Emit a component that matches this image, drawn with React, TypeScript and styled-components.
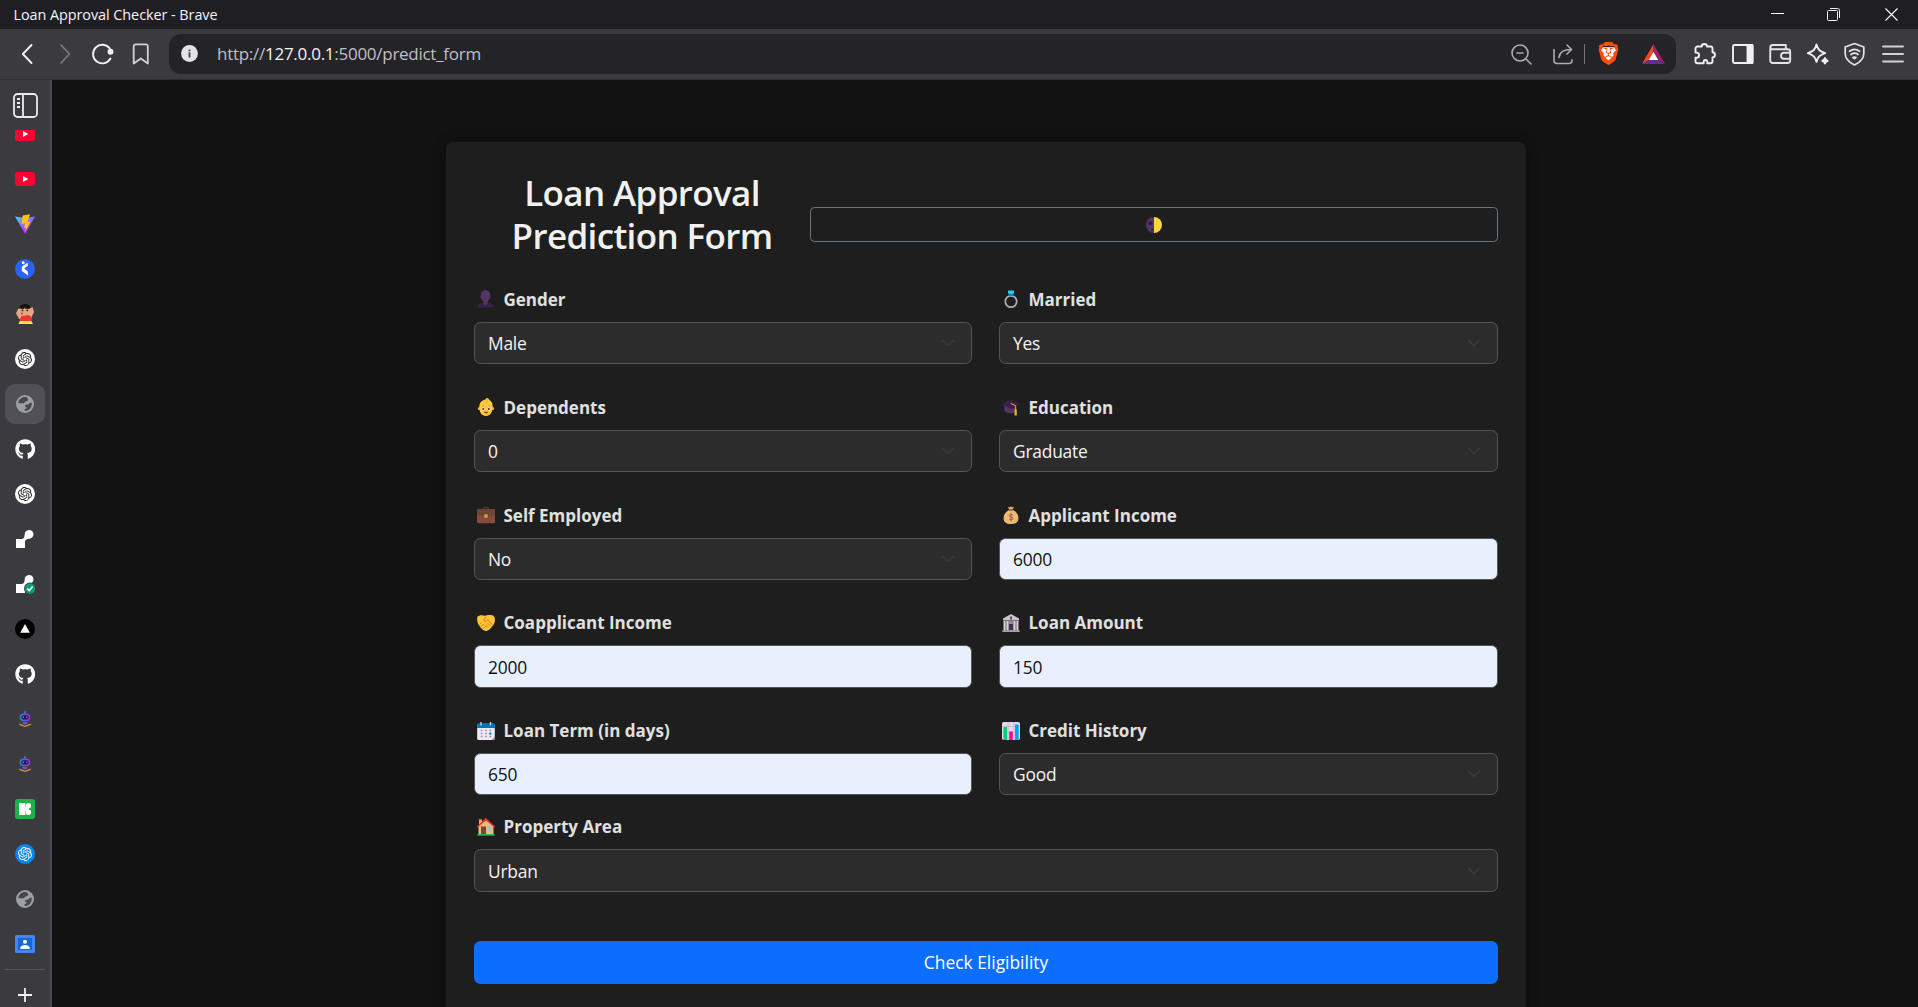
import React from "react";
import styled, { createGlobalStyle } from "styled-components";
import { SiBrave, SiOpenai } from "react-icons/si";
import { FaGithub } from "react-icons/fa";

const GlobalStyle = createGlobalStyle`
  *, *::before, *::after { box-sizing: border-box; }
  html, body { margin: 0; height: 100%; overflow: hidden; background: #121212; }
  body { font-family: "Open Sans", "Noto Sans", sans-serif; }
  svg { display: block; flex: none; }
`;

const Window = styled.div`
  display: flex;
  flex-direction: column;
  height: 100vh;
  width: 100%;
`;

/* ---------- title bar ---------- */
const TitleBar = styled.header`
  display: flex;
  align-items: center;
  justify-content: space-between;
  height: 29px;
  padding-left: 13.5px;
  background: #1f1e23;
  color: #f4f4f6;
  font-size: 14.4px;
  letter-spacing: -0.05px;
`;

const WindowControls = styled.div`
  display: flex;
  height: 29px;
  margin-right: -1.5px;
`;

const WindowButton = styled.span`
  display: grid;
  place-items: center;
  width: 56.7px;
`;

/* ---------- toolbar ---------- */
const Toolbar = styled.nav`
  display: flex;
  align-items: center;
  height: 51px;
  padding: 0 6.4px 1px 8px;
  background: #3b3a3f;
  border-bottom: 1px solid #303034;
`;

const ToolButton = styled.span<{ $width?: number }>`
  display: grid;
  place-items: center;
  width: ${(p) => p.$width ?? 38}px;
  height: 38px;
  flex: none;
  color: #e4e3e8;
`;

const AddressBar = styled.div`
  display: flex;
  align-items: center;
  flex: 1;
  height: 40px;
  margin: 1px 10.6px 0 9px;
  padding: 0 2px 1px 12px;
  border-radius: 12px;
  background: #242328;
`;

const Url = styled.span`
  flex: 1;
  margin-left: 19px;
  padding-bottom: 1px;
  font-size: 17px;
  letter-spacing: -0.27px;
  color: #c0bfc5;
  white-space: nowrap;

  b {
    font-weight: 400;
    color: #f4f4f6;
  }
`;

const AddressDivider = styled.span`
  width: 1.5px;
  height: 20px;
  background: #737278;
`;

/* ---------- body ---------- */
const Body = styled.div`
  display: flex;
  flex: 1;
  min-height: 0;
`;

const Sidebar = styled.aside`
  display: flex;
  flex-direction: column;
  align-items: center;
  width: 52px;
  border-right: 2px solid #4b4a4f;
  background: #3b3a3f;
`;

const SidebarTop = styled.div`
  display: grid;
  place-items: center;
  flex: none;
  width: 50px;
  height: 50px;
`;

const TabList = styled.div`
  display: flex;
  flex-direction: column;
  gap: 5px;
  flex: none;
  height: 838px;
  overflow: hidden;

  > :first-child {
    margin-top: -16px;
  }
`;

const Tab = styled.div<{ $active?: boolean }>`
  display: grid;
  place-items: center;
  flex: none;
  width: 40px;
  height: 40px;
  border-radius: 10px;
  background: ${(p) => (p.$active ? "#515056" : "transparent")};
`;

const SidebarBottom = styled.div`
  display: flex;
  justify-content: center;
  width: 40px;
  padding-top: 18px;
  border-top: 1px solid #56555b;
  margin-top: 1px;
`;

const Page = styled.main`
  flex: 1;
  display: flex;
  justify-content: center;
  align-items: flex-start;
  padding-top: 62.3px;
  overflow: hidden;
  background: #121212;
`;

const Card = styled.section`
  width: 1080px;
  height: 920px;
  flex: none;
  margin-left: 2px;
  padding: 28px;
  border-radius: 7px;
  background: #1e1e1e;
  box-shadow: 0 0 12px rgba(0, 0, 0, 0.35);
`;

const FormHeader = styled.div`
  display: flex;
  align-items: center;
  height: 108px;
  margin-bottom: 7.7px;
`;

const Title = styled.h2`
  width: 336px;
  margin: 0 0 20px;
  padding: 0 20px;
  font-size: 35px;
  font-weight: 600;
  line-height: 43.2px;
  letter-spacing: -0.65px;
  text-align: center;
  color: #f1f1f1;
`;

const ThemeButton = styled.button`
  display: grid;
  place-items: center;
  flex: 1;
  height: 35px;
  margin-top: 1px;
  padding: 1px 0 0;
  border: 1px solid #6c757d;
  border-radius: 4.5px;
  background: transparent;
`;

const FieldGrid = styled.div`
  display: grid;
  grid-template-columns: 498px 1fr;
  column-gap: 27px;
  row-gap: 29.5px;
  margin-bottom: 17.9px;
`;

const Field = styled.div`
  display: flex;
  flex-direction: column;
  gap: 9px;
`;

const Label = styled.label`
  display: flex;
  align-items: center;
  gap: 9px;
  height: 27px;
  padding-left: 2.5px;
  font-size: 17px;
  font-weight: 700;
  letter-spacing: 0;
  color: #e0e0e0;
  white-space: nowrap;
`;

const Control = styled.div<{ $filled?: boolean }>`
  display: flex;
  align-items: center;
  justify-content: space-between;
  height: 42.3px;
  padding: 0 16px 0 13px;
  border: 1px solid #555;
  border-radius: 6.5px;
  font-size: 17.4px;
  letter-spacing: -0.23px;
  background: ${(p) => (p.$filled ? "#e8f0fe" : "#2c2c2c")};
  color: ${(p) => (p.$filled ? "#111" : "#f4f4f4")};
`;

const SubmitButton = styled.button`
  width: 100%;
  height: 43px;
  margin-top: 49.2px;
  border: 0;
  border-radius: 6.5px;
  background: #0d6efd;
  color: #fff;
  font-family: inherit;
  font-size: 17.4px;
  letter-spacing: 0;
`;

/* ---------- line icons ---------- */
type LineProps = { size?: number; box?: number; width?: number; color?: string; children: React.ReactNode };
const Line = ({ size = 24, box = 24, width = 1.7, color = "currentColor", children }: LineProps) => (
  <svg
    width={size}
    height={size}
    viewBox={`0 0 ${box} ${box}`}
    fill="none"
    stroke={color}
    strokeWidth={width}
    strokeLinecap="round"
    strokeLinejoin="round"
  >
    {children}
  </svg>
);

const Back = () => <Line color="#f2f2f4" width={1.9}><path d="M16.5 3 7.800 12l8.700 9" /></Line>;
const Forward = () => <Line color="#7b7a80"><path d="M8 3l8.500 9L8 21" /></Line>;
const Reload = () => (
  <Line color="#f2f2f4" width={1.9}>
    <path d="M18.800 6.500A9.300 9.300 0 1 0 19.500 16.500" />
    <circle cx="19.500" cy="9.700" r="2" fill="#f2f2f4" />
  </Line>
);
const Bookmark = () => (
  <Line color="#d2d1d6" width={1.8}>
    <path d="M4.700 21.500V4.300a2 2 0 0 1 2-2h10.100a2 2 0 0 1 2 2v17.200l-7-5z" />
  </Line>
);
const Info = () => (
  <svg width="17" height="17" viewBox="0 0 17 17">
    <circle cx="8.5" cy="8.5" r="8.4" fill="#e4e3e8" />
    <path d="M7.600 7.300h1.800v5.200H7.600zM7.600 4.500h1.800v1.700H7.600z" fill="#46454b" />
  </svg>
);
const ZoomOut = () => (
  <Line color="#acabb1" width={1.6}>
    <circle cx="11" cy="11" r="8" />
    <path d="M17 17l5 5M8 11h6" />
  </Line>
);
const Share = () => (
  <Line color="#acabb1" width={1.6}>
    <path d="M3 7.500v11a3 3 0 0 0 3 3h12a3 3 0 0 0 3-3v-.7M8 15.500c.5-5 4-8 12-8M16 3l4.600 4.500L16 12" />
  </Line>
);
const Brave = () => (
  <svg width="23" height="23" viewBox="0 0 24 24">
    <path d="M6 5.500h12l2 3-3 9-5 4-5-4-3-9z" fill="#fff" />
    <SiBrave size={24} color="#ff4f0a" />
  </svg>
);
const Bat = () => (
  <svg width="23" height="20" viewBox="0 0 23 20">
    <path d="M11.500 0 0 20l6.800-4 4.700-8.200z" fill="#ff4724" />
    <path d="M11.500 0 23 20l-6.800-4-4.700-8.200z" fill="#9e1f63" />
    <path d="M0 20h23l-6.800-4H6.800z" fill="#662d91" />
    <path d="M11.500 7.800 16.200 16H6.800z" fill="#fff" />
  </svg>
);
const Puzzle = () => (
  <Line color="#f0f0f2" width={1.9}>
    <path d="M2.500 6.500a2 2 0 0 1 2-2h4.200C8.700 3 9.700 2 11.300 2s2.600 1 2.600 2.500h3.600a2 2 0 0 1 2 2v3.700c1.500 0 2.500 1 2.500 2.600s-1 2.600-2.500 2.600v3.900a2 2 0 0 1-2 2h-3.200v-1.500a1.800 1.800 0 0 0-3.600 0v1.500H4.500a2 2 0 0 1-2-2v-3.500h1a2.600 2.600 0 0 0 0-5.200h-1z" />
  </Line>
);
const SidePanel = () => (
  <Line color="#f0f0f2" width={1.9}>
    <rect x="2" y="3" width="19.500" height="18" rx="1.500" />
    <path d="M16.500 3h5v18h-5z" fill="#f0f0f2" />
  </Line>
);
const Wallet = () => (
  <Line color="#e4e3e8" width={1.9}>
    <path d="M2.300 5.500a2.500 2.500 0 0 1 2.500-2.500h13v4M2.300 5.500A2 2 0 0 0 4.300 7.300h15.400a2.500 2.500 0 0 1 2.500 2.500v8.700a2.500 2.500 0 0 1-2.500 2.500h-15a2.500 2.500 0 0 1-2.500-2.500z" />
    <path d="M22 10.700h-6a3 3 0 0 0-3 3v0a3 3 0 0 0 3 3h6" />
  </Line>
);
const Sparkle = () => (
  <Line color="#f0f0f2" width={1.9}>
    <path d="M10.500 2.500c1.300 5 3 6.700 8.700 8.700-5.700 2-7.400 3.700-8.700 8.700-1.300-5-3-6.700-8.700-8.700 5.700-2 7.400-3.700 8.700-8.700z" />
    <path d="M19 16c.5 1.800 1 2.300 2.800 2.800-1.800.5-2.300 1-2.800 2.800-.5-1.800-1-2.300-2.800-2.800 1.800-.5 2.300-1 2.800-2.800z" fill="#f0f0f2" />
  </Line>
);
const Vpn = () => (
  <Line color="#e4e3e8" width={1.7}>
    <path d="M11.500 1.500 20.800 5v6.500c0 5-3.300 8.700-9.300 11.500-6-2.800-9.300-6.500-9.300-11.500V5z" />
    <path d="M6.500 9.300a8.500 8.500 0 0 1 10 0M8 12.500a6 6 0 0 1 7 0M10 15.500a3 3 0 0 1 3 0l-1.500 1.200z" />
  </Line>
);
const Menu = () => <Line color="#d2d1d6" width={1.9}><path d="M2 4.500h20M2 12h20M2 19.500h20" /></Line>;

const Chevron = () => (
  <Line size={14} box={16} width={2} color="#343a40"><path d="M2 5l6 6 6-6" /></Line>
);

/* ---------- sidebar icons ---------- */
const PanelToggle = () => (
  <svg width="25" height="25" viewBox="0 0 25 25">
    <rect x="1" y="1" width="23" height="23" rx="3.500" fill="none" stroke="#ebebee" strokeWidth="1.800" />
    <path d="M10 1v23" stroke="#ebebee" strokeWidth="1.800" />
    <path d="M4 5h3v2H4zM4 9h3v2H4zM4 13h3v2H4z" fill="#ebebee" />
  </svg>
);
const YouTube = () => (
  <svg width="20" height="14" viewBox="0 0 20 14">
    <rect width="20" height="14" rx="3.200" fill="#ff0033" />
    <path d="M8 4l5.300 3L8 10z" fill="#fff" />
  </svg>
);
const Vite = () => (
  <svg width="20" height="20" viewBox="0 0 20 20">
    <defs>
      <linearGradient id="vite" x1="0" y1="0" x2=".7" y2="1">
        <stop offset="0" stopColor="#41d1ff" />
        <stop offset=".8" stopColor="#bd34fe" />
      </linearGradient>
    </defs>
    <path d="M0 2.500 10.200 20 20 2.500 10 4z" fill="url(#vite)" />
    <path d="M15 .200 7.700 1.500 6.500 10l3.500-.8-.8 5 1.700-.5-.6 4 5.300-10.400-3.100.500z" fill="#ffc21c" />
  </svg>
);
const BlueFigure = () => (
  <svg width="20" height="20" viewBox="0 0 20 20">
    <circle cx="10" cy="10" r="10" fill="#2b62f0" />
    <circle cx="8.200" cy="3.800" r="1.500" fill="#fff" />
    <path d="M12.800 3.500v3.300L9.300 9.500 13 12.800v3.700L6.800 11.900V7.700z" fill="#fff" />
  </svg>
);
const Cartoon = () => (
  <svg width="20" height="20" viewBox="0 0 20 20">
    <path d="M3.500 20 5 16.500h11L18 20z" fill="#ffe14a" />
    <path d="M4.500 11 5 17h11.500l1-7-7 1z" fill="#e83a35" />
    <path d="M1 9.500 3 5l2-.5h10L17.500 3l1.500 5-2.500 5-3-2-7 1-2 3.500z" fill="#e9a584" />
    <path d="M4.500 4.500C5 1 8 0 10.500 0c3 0 5 1.500 4.500 4.500L10 3.200z" fill="#17130f" />
    <path d="M6 4.200h3M10.800 4.200h3.200" stroke="#17130f" strokeWidth="1.100" />
    <circle cx="7.500" cy="6.300" r=".9" fill="#17130f" />
    <circle cx="12.300" cy="6.300" r=".9" fill="#17130f" />
    <circle cx="7" cy="9.500" r="1" fill="#b3403a" />
  </svg>
);
const OpenAi = ({ blue }: { blue?: boolean }) => (
  <svg width="20" height="20" viewBox="0 0 20 20">
    <circle cx="10" cy="10" r="10" fill={blue ? "#0a84f5" : "#fff"} />
    <SiOpenai x="3" y="3" size={14} color={blue ? "#fff" : "#222"} />
  </svg>
);
const Globe = () => (
  <svg width="18" height="18" viewBox="0 0 18 18">
    <circle cx="9" cy="9" r="9" fill="#9aa0a6" />
    <path
      d="M11 2.300C6.500 1.300 2.800 4 2.200 8.300h5.300c1.500 0 1-1.800 2.500-2 1.500-.2 2.200-.3 2.200-1.700 0-1-1.200-.8-1.200-2.300zM15.800 8c-1.200-.7-2.300 0-2.800 1-.5.900-2 .5-3 .8-1.600.5-1 2.300.3 2.500.9.200.2 1.900-1.800 1.700v1.800c4.500.6 7.500-3.300 7.300-7.800z"
      fill="#48474d"
    />
  </svg>
);
const GitHub = () => <FaGithub size={20.5} color="#fff" />;
const Bot = ({ checked }: { checked?: boolean }) => (
  <svg width="20" height="20" viewBox="0 0 20 20">
    <path d="M9.700 5.500a4.400 4.400 0 1 1 4.600 4.200c-2.300.1-4 .8-4.300 3V19H1v-9h5.500c2 0 3-1.300 3.200-4.500z" fill="#fff" />
    {checked && (
      <>
        <circle cx="15" cy="14.500" r="6" fill="#3b3a3f" />
        <circle cx="15" cy="14.500" r="5.200" fill="#0d9c74" />
        <path d="m12.300 14.600 2 2 3.300-4" fill="none" stroke="#fff" strokeWidth="1.500" />
      </>
    )}
  </svg>
);
const Triangle = () => (
  <svg width="20" height="20" viewBox="0 0 20 20">
    <circle cx="10" cy="10" r="10" fill="#000" />
    <path d="m10 5 4.800 8.800H5.200z" fill="#fff" />
  </svg>
);
const Robot = () => (
  <svg width="20" height="20" viewBox="0 0 20 20">
    <defs>
      <linearGradient id="bot" x1="0" x2="1">
        <stop offset="0" stopColor="#168fe5" />
        <stop offset="1" stopColor="#b322c8" />
      </linearGradient>
    </defs>
    <circle cx="10" cy="3.300" r="1" fill="#3f7df0" />
    <rect x="4.700" y="4.500" width="10.600" height="7.800" rx="3.800" fill="url(#bot)" />
    <rect x="6.300" y="6.200" width="7.400" height="4.300" rx="2" fill="#1d1a4d" />
    <circle cx="8.400" cy="8.300" r=".8" fill="#28d1ff" />
    <circle cx="11.800" cy="8.300" r=".8" fill="#ee54ff" />
    <path d="M7 13h6l-1.500 2.200h-3z" fill="url(#bot)" />
    <path d="m4.300 14.500 5.700 2.200 5.700-2.200v1.500L10 18l-5.700-2z" fill="#d9943b" />
  </svg>
);
const GreenBlocks = () => (
  <svg width="20" height="20" viewBox="0 0 20 20">
    <rect width="20" height="20" rx="2.500" fill="#1fb141" />
    <path d="M4 4h6v12H4z" fill="#fff" />
    <path d="M10 4h.8v12H10z" fill="#a5dfb1" />
    <circle cx="13.400" cy="6.800" r="2.700" fill="#fff" />
    <circle cx="13.400" cy="13.200" r="2.700" fill="#fff" />
    <path d="M9.500 8h4.500v4H9.500z" fill="#fff" />
  </svg>
);
const Classroom = () => (
  <svg width="20" height="18" viewBox="0 0 20 18">
    <rect width="20" height="18" rx="1.500" fill="#4285f4" />
    <rect x="3" y="3" width="14" height="12" fill="#1967d2" />
    <circle cx="10" cy="6.700" r="2" fill="#fff" />
    <path d="M5.300 14v-1c0-2 2.500-3 4.700-3s4.700 1 4.700 3v1z" fill="#fff" />
  </svg>
);

/* ---------- form glyphs ---------- */
const Glyph = ({ children, size = 18 }: { children: React.ReactNode; size?: number }) => (
  <svg width={size} height={size} viewBox="0 0 18 18">{children}</svg>
);
const Person = () => (
  <Glyph>
    <path d="M.700 17.500c0-3 2-4.500 5-4.500h5.600c3 0 5 1.500 5 4.500z" fill="#38204a" />
    <path d="M8.500.300c3.200 0 4.700 2 4.700 4.700 0 1.200.5 1 .3 2.200-.2 1-1 1.500-1.300 2.100-.5 1.300-1 2-1.500 2.500v2L8.500 15.500l-2.200-1.700v-2C5.800 11.300 5.300 10.600 4.800 9.300c-.3-.6-1.100-1.100-1.300-2.100C3.300 6 3.800 6.200 3.800 5 3.800 2.300 5.300.300 8.500.300z" fill="#533566" />
  </Glyph>
);
const Ring = () => (
  <Glyph>
    <circle cx="9" cy="11.500" r="5.700" fill="none" stroke="#b4acbc" strokeWidth="1.700" />
    <path d="M6 .500h6v2.500L9 6 6 3z" fill="#26c9fc" />
    <path d="M6.500 4h5v2h-5z" fill="#0084ce" />
  </Glyph>
);
const Baby = () => (
  <Glyph>
    <circle cx="2.300" cy="10.500" r="1.500" fill="#ffb02e" />
    <circle cx="15.700" cy="10.500" r="1.500" fill="#ffb02e" />
    <path d="M9 0c2 0 3 .8 3.300 2 2.200 1 3.400 3.300 3.400 6.500 0 5.500-2.300 9.500-6.700 9.500S2.300 14.500 2.300 9C2.300 4.500 4.800 2 9 1.500z" fill="#ffc83d" />
    <path d="M8 1.500c3-.5 3.500 2.300 1 3M5 8.200l2-.7M11 7.500l2 .7" fill="none" stroke="#e19747" strokeWidth=".8" />
    <circle cx="6" cy="11" r="1.500" fill="#fff" /><circle cx="12" cy="11" r="1.500" fill="#fff" />
    <circle cx="6.200" cy="11" r="1" fill="#402a32" /><circle cx="11.800" cy="11" r="1" fill="#402a32" />
    <path d="M7 13.800h4c0 2-4 2-4 0z" fill="#bb1d48" />
  </Glyph>
);
const Cap = () => (
  <Glyph>
    <path d="M2.300 7v4.500c.3 2.500 3 3.700 6.200 3.700s5.500-1.500 5.500-3.700V7z" fill="#533566" />
    <path d="M0 5.800 8.500 1.500 18 5.800l-8.500 5.500z" fill="#381e49" />
    <path d="m8.700 5.500 5 2.200v4.500" fill="none" stroke="#f9a72c" strokeWidth="1" />
    <path d="M12.500 11.500h2.300v6h-2.300z" fill="#f3a72f" />
  </Glyph>
);
const Briefcase = () => (
  <Glyph>
    <path d="M6 4C6 .500 12 .500 12 4" fill="none" stroke="#5a382f" strokeWidth="1.200" />
    <path d="M0 4a1 1 0 0 1 1-1h16a1 1 0 0 1 1 1V16a1.300 1.300 0 0 1-1.300 1.300H1.300A1.300 1.300 0 0 1 0 16z" fill="#864b3b" />
    <path d="M0 4a1 1 0 0 1 1-1h16a1 1 0 0 1 1 1v5c-3 1-6 1.300-9 1.300S3 10 0 9z" fill="#6d4534" />
    <rect x="7.300" y="8.300" width="3.400" height="3.400" rx=".7" fill="#e39d48" />
  </Glyph>
);
const MoneyBag = () => (
  <Glyph>
    <path d="m6 .700 1.700.700L9 .200l1.300 1.200L12 .700 11 3.500H7z" fill="#f3ad61" />
    <path d="M6.500 4.200h5c2.800 1.800 4.900 4.300 4.900 7.800 0 4-2.400 6-7.400 6s-7.400-2-7.400-6c0-3.500 2.100-6 4.900-7.800z" fill="#f1b972" />
    <path d="M6.700 3.300h4.600v1.200H6.700z" fill="#8c5543" />
    <path d="M11 9.300c-.8-1.200-3.700-1.100-3.700.4 0 1.900 3.800.9 3.800 2.900 0 1.700-3.200 1.700-4 .2M9 7.300v8" fill="none" stroke="#8c5543" strokeWidth=".9" />
  </Glyph>
);
const Handshake = () => (
  <Glyph>
    <path d="M.300 2.800C2 1 5 .800 8 1.700c3-.9 7.500-.9 9.300 1 1.200 2.500.7 6.300-1.300 8.800-2 2.700-5 5.800-7.500 5.500-2.500-.5-4.500-2.700-6-5C.500 9.500-.200 6.500.300 2.800z" fill="#ffc43a" />
    <path d="M9 2.500 6.700 6.500c1.500 1.500 3 .3 4-.7l4.800 5M11 9.500l3 3M8.700 11l2.500 2.700M2.500 10.500l2-2M4 12.700l3-3M6 14.700l2.500-2.500" fill="none" stroke="#df7d22" strokeWidth="1" />
  </Glyph>
);
const Bank = () => (
  <Glyph>
    <path d="M9 0 17 4.500V6.500H1V4.500z" fill="#cbc3ce" />
    <path d="M1.500 7h15v9.500h-15z" fill="#8f8892" />
    <path d="M2.500 7v9.200M5.500 7v9.200M12.500 7v9.200M15.500 7v9.200" stroke="#dad5dc" strokeWidth="1.400" />
    <path d="M7 10h4v6.500H7zM8.200 2.500h1.600v3H8.200z" fill="#42334f" />
    <path d="M.300 16.200h17.400V18H.300z" fill="#a8a2aa" />
  </Glyph>
);
const Calendar = () => (
  <Glyph>
    <rect x=".2" y="1.800" width="17.600" height="16.200" rx="1.500" fill="#efe9f5" />
    <path d="M0 3a1.500 1.500 0 0 1 1.500-1.500h15A1.500 1.500 0 0 1 18 3v3H0z" fill="#0074ba" />
    <path d="M4 0v3.500M13.500 0v3.500" stroke="#d3d3d3" strokeWidth="1.300" />
    <path d="M3.800 8.500h10.500M3.800 11.500h6M3.800 14.500h10.500" stroke="#998ea4" strokeWidth="1.500" strokeDasharray="1.700 2.600" />
    <path d="M12.200 10.500h2.200v2.200h-2.200z" fill="#0084ce" />
    <path d="M18 14.500 14.500 18h1.800A1.700 1.700 0 0 0 18 16.300z" fill="#998ea4" />
  </Glyph>
);
const Chart = () => (
  <Glyph>
    <rect width="18" height="18" rx="1.800" fill="#e1d8ec" />
    <path d="M6 0v18M12 0v18M0 4.500h18M0 10h18" stroke="#bfb0cd" strokeWidth=".7" />
    <path d="M1.500 5H5v13H1.500z" fill="#00cb6d" />
    <path d="M7.200 9.500h3.600V18H7.200z" fill="#f70a8d" />
    <path d="M13 2.500h3.700V18H13z" fill="#00a6ed" />
  </Glyph>
);
const House = () => (
  <Glyph>
    <path d="M2 1.500h3V8H2z" fill="#f3ad61" />
    <path d="M1.800 .800h3.400V2H1.800z" fill="#bc4b38" />
    <path d="M1.500 8.500 9 2l7.500 6.500v8h-15z" fill="#f3b77a" />
    <path d="M4 8.500h5v8H4z" fill="#7d4533" />
    <path d="M10.500 8.500h4v3.800h-4z" fill="#8bc9ec" />
    <path d="M.800 8.500 8.800 1l8.400 7.500" fill="none" stroke="#f8312f" strokeWidth="1.500" strokeLinecap="round" />
    <path d="M.300 16.200h17.400v1.400H.300z" fill="#00d26a" />
  </Glyph>
);
const HalfMoon = () => (
  <Glyph size={16}>
    <path d="M9 0a9 9 0 0 0 0 18z" fill="#533566" />
    <path d="M9 0a9 9 0 0 1 0 18z" fill="#fcd53f" />
    <circle cx="5" cy="7" r="2.300" fill="#321b41" />
    <circle cx="6.800" cy="14" r="1.200" fill="#321b41" />
    <circle cx="12.800" cy="5.500" r="1.300" fill="#f9c23c" />
  </Glyph>
);

const fields: { icon: React.FC; label: string; value: string; filled?: boolean }[] = [
  { icon: Person, label: "Gender", value: "Male" },
  { icon: Ring, label: "Married", value: "Yes" },
  { icon: Baby, label: "Dependents", value: "0" },
  { icon: Cap, label: "Education", value: "Graduate" },
  { icon: Briefcase, label: "Self Employed", value: "No" },
  { icon: MoneyBag, label: "Applicant Income", value: "6000", filled: true },
  { icon: Handshake, label: "Coapplicant Income", value: "2000", filled: true },
  { icon: Bank, label: "Loan Amount", value: "150", filled: true },
  { icon: Calendar, label: "Loan Term (in days)", value: "650", filled: true },
  { icon: Chart, label: "Credit History", value: "Good" },
];

const FormField = ({ icon: Icon, label, value, filled }: (typeof fields)[number]) => (
  <Field>
    <Label><Icon />{label}</Label>
    <Control $filled={filled}>
      {value}
      {!filled && <Chevron />}
    </Control>
  </Field>
);

const tabs: React.ReactNode[] = [
  <YouTube />, <YouTube />, <Vite />, <BlueFigure />, <Cartoon />, <OpenAi />, <Globe />, <GitHub />,
  <OpenAi />, <Bot />, <Bot checked />, <Triangle />, <GitHub />, <Robot />, <Robot />, <GreenBlocks />,
  <OpenAi blue />, <Globe />, <Classroom />,
];

const ACTIVE_TAB = 6;

export default function App() {
  return (
    <Window>
      <GlobalStyle />
      <TitleBar>
        Loan Approval Checker - Brave
        <WindowControls>
          <WindowButton>
            <svg width="13" height="13"><path d="M0 5.500h13" stroke="#fff" /></svg>
          </WindowButton>
          <WindowButton>
            <svg width="14" height="13" fill="none" stroke="#f0f0f0">
              <rect x=".5" y="2.500" width="10" height="10" rx="1" />
              <path d="M3 .500h7.500a2 2 0 0 1 2 2V10" />
            </svg>
          </WindowButton>
          <WindowButton>
            <svg width="13" height="13" stroke="#fff" strokeWidth="1.100"><path d="m.500.500 12 12M12.500.500l-12 12" /></svg>
          </WindowButton>
        </WindowControls>
      </TitleBar>

      <Toolbar>
        <ToolButton><Back /></ToolButton>
        <ToolButton><Forward /></ToolButton>
        <ToolButton><Reload /></ToolButton>
        <ToolButton><Bookmark /></ToolButton>
        <AddressBar>
          <Info />
          <Url>http://<b>127.0.0.1</b>:5000/predict_form</Url>
          <ToolButton $width={42}><ZoomOut /></ToolButton>
          <ToolButton $width={42}><Share /></ToolButton>
          <AddressDivider />
          <ToolButton $width={47}><Brave /></ToolButton>
          <ToolButton $width={42}><Bat /></ToolButton>
        </AddressBar>
        {[<Puzzle />, <SidePanel />, <Wallet />, <Sparkle />, <Vpn />, <Menu />].map((icon, i) => (
          <ToolButton key={i} $width={37.5}>{icon}</ToolButton>
        ))}
      </Toolbar>

      <Body>
        <Sidebar>
          <SidebarTop><PanelToggle /></SidebarTop>
          <TabList>
            {tabs.map((icon, i) => (
              <Tab key={i} $active={i === ACTIVE_TAB}>{icon}</Tab>
            ))}
          </TabList>
          <SidebarBottom>
            <svg width="14" height="14" stroke="#f0f0f2" strokeWidth="1.800"><path d="M7 0v14M0 7h14" /></svg>
          </SidebarBottom>
        </Sidebar>

        <Page>
          <Card>
            <FormHeader>
              <Title>Loan Approval Prediction Form</Title>
              <ThemeButton><HalfMoon /></ThemeButton>
            </FormHeader>
            <FieldGrid>
              {fields.map((f) => <FormField key={f.label} {...f} />)}
            </FieldGrid>
            <FormField icon={House} label="Property Area" value="Urban" />
            <SubmitButton>Check Eligibility</SubmitButton>
          </Card>
        </Page>
      </Body>
    </Window>
  );
}
